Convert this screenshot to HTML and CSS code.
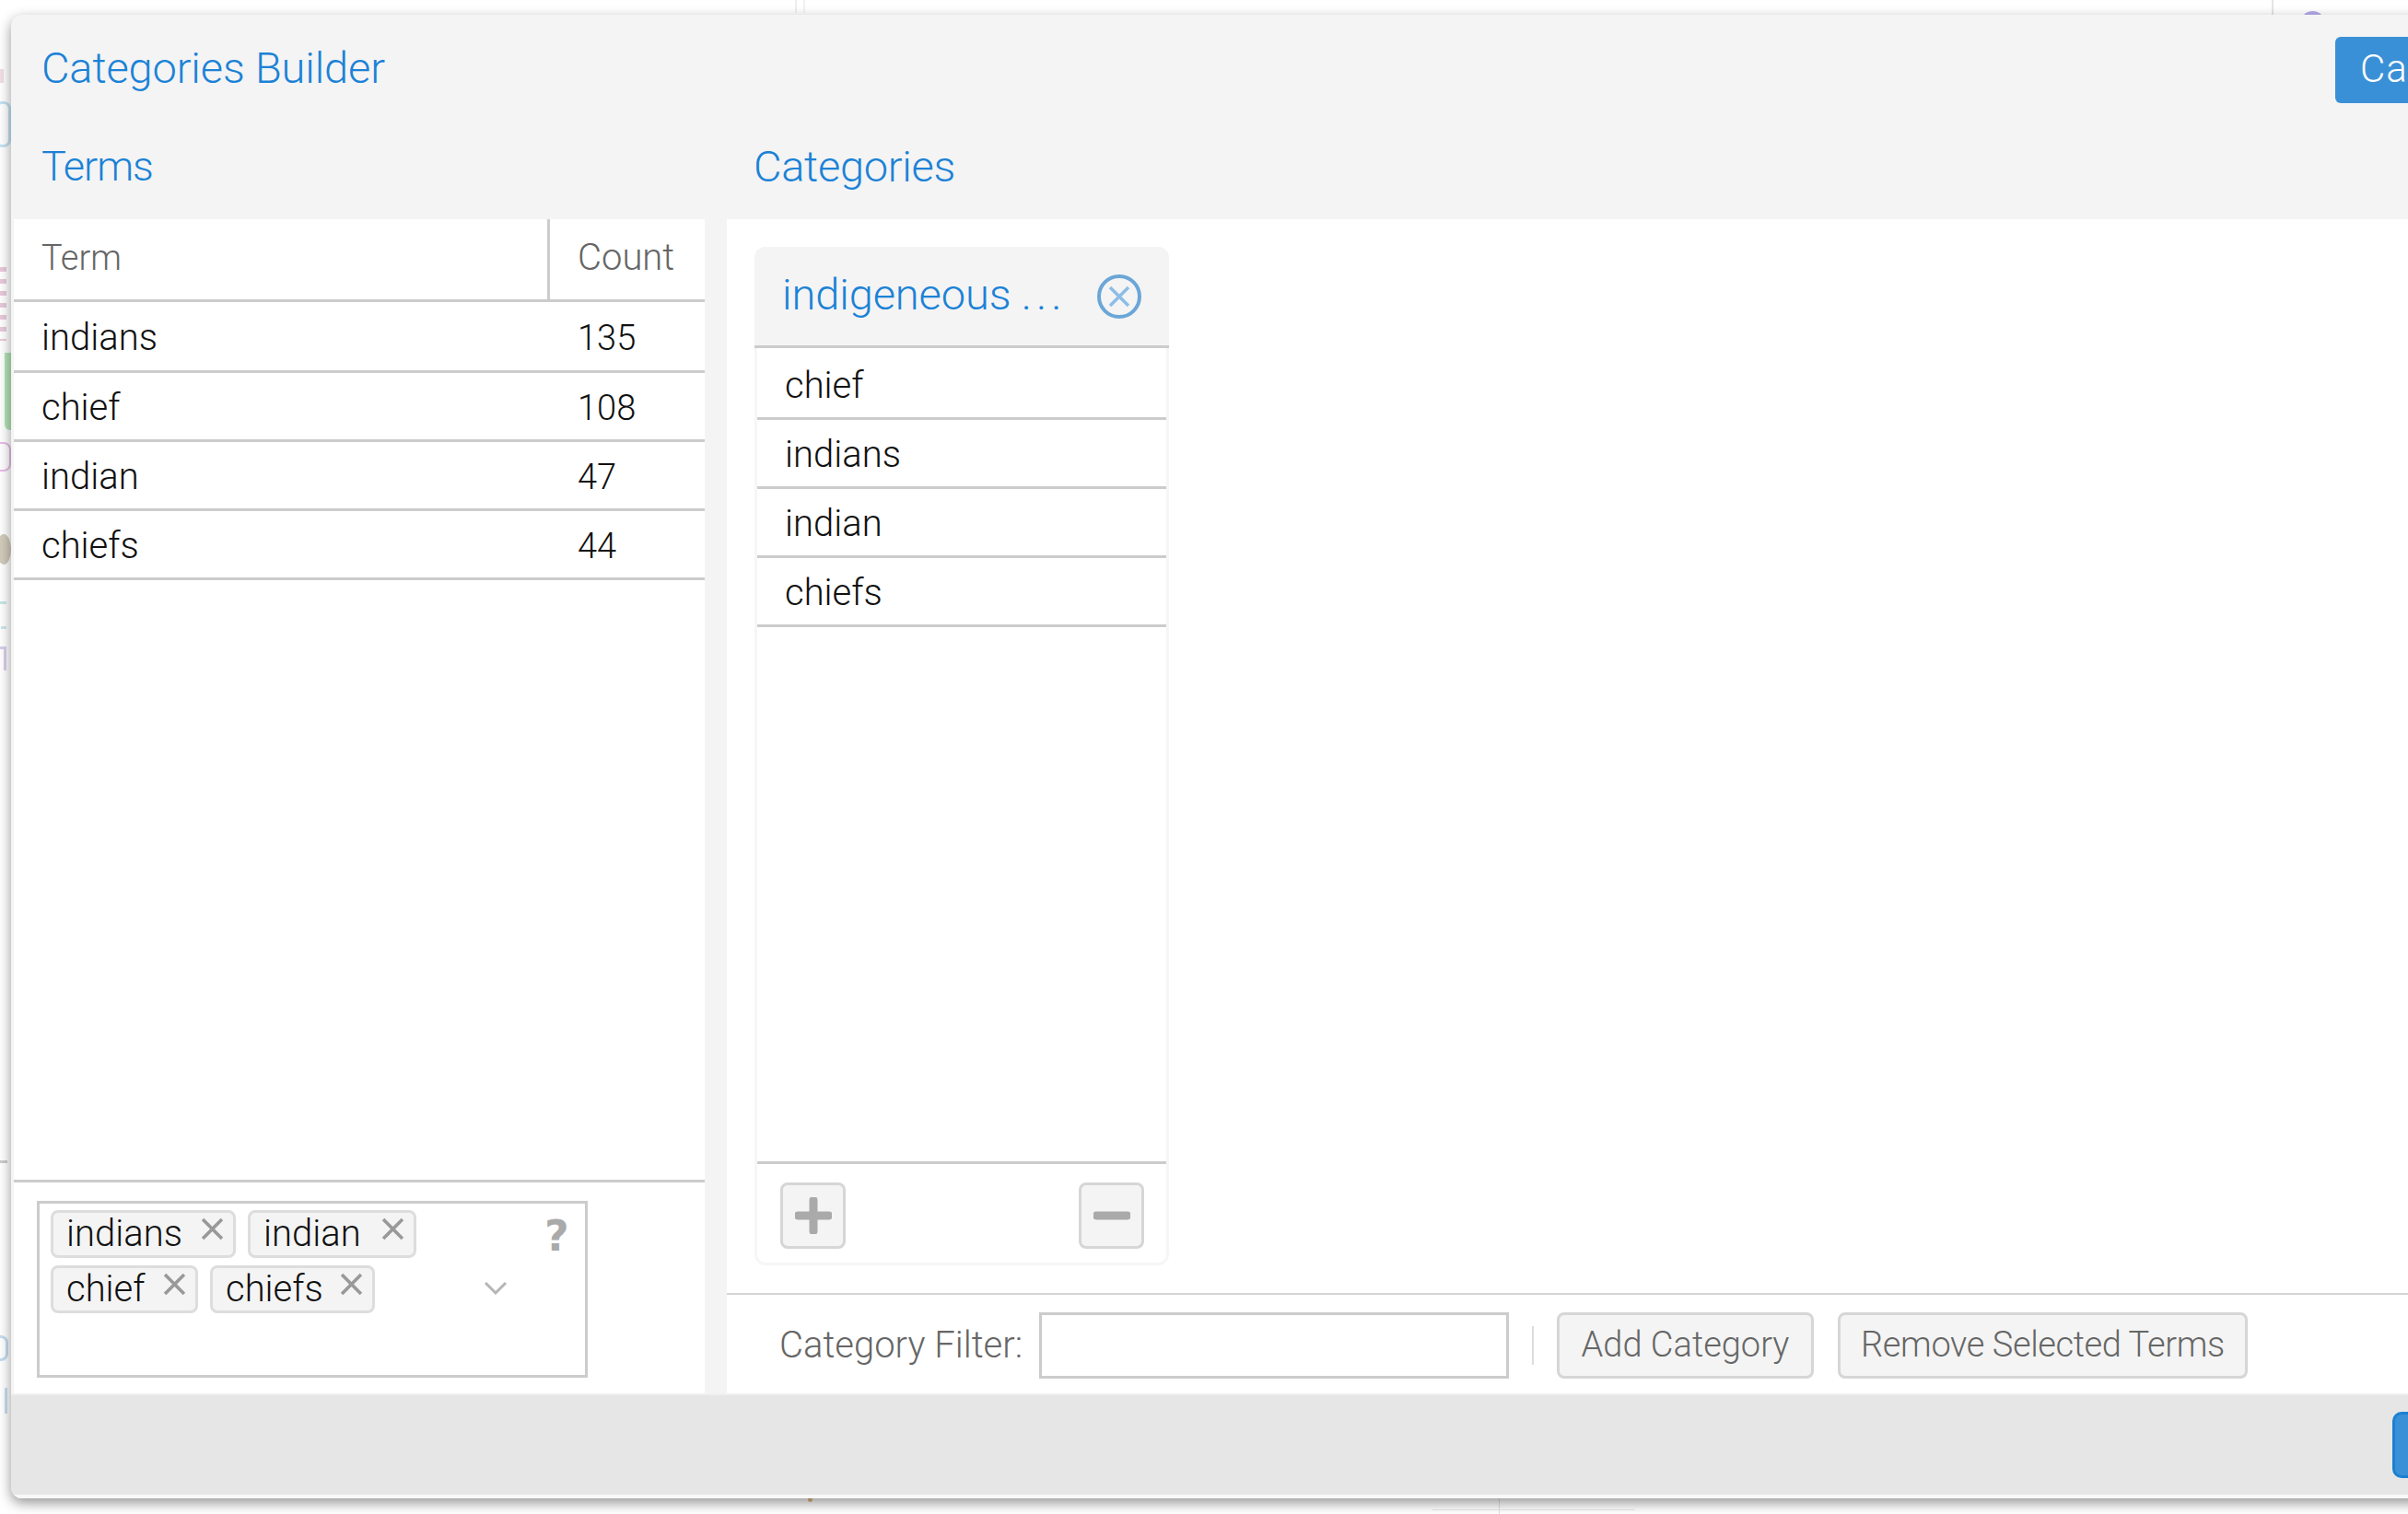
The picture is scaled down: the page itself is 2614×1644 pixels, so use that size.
FILE: index.html
```html
<!DOCTYPE html>
<html lang="en">
<head>
<meta charset="utf-8">
<title>Categories Builder</title>
<link rel="stylesheet" href="styles.css">
</head>
<body>
<div class="backdrop">
  <span class="mark mark-blue"></span>
  <span class="mark mark-pink"></span>
  <span class="mark mark-pink2"></span>
  <span class="mark mark-green"></span>
  <span class="mark mark-lilac"></span>
  <span class="mark mark-tan"></span>
  <span class="mark mark-teal"></span>
  <span class="mark mark-teal2"></span>
  <span class="mark mark-purple"></span>
  <span class="mark mark-gray"></span>
  <span class="mark mark-nine"></span>
  <span class="mark mark-four"></span>
  <span class="mark mark-dot"></span>
  <span class="mark mark-vline"></span>
  <span class="mark mark-hline"></span>
  <span class="mark mark-top1"></span>
  <span class="mark mark-top2"></span>
  <span class="rule-top"></span>
  <span class="avatar"></span>
</div>
<main class="modal">
  <header class="modal-head">
    <div class="title-row">
      <h1 class="title">Categories Builder</h1>
      <button class="btn-primary cancel">Cancel</button>
    </div>
    <div class="section-row">
      <h2 class="section section-terms">Terms</h2>
      <h2 class="section section-cats">Categories</h2>
    </div>
  </header>
  <div class="modal-body">
    <section class="terms">
      <div class="table-head">
        <div class="th th-term">Term</div>
        <div class="th th-count">Count</div>
      </div>
      <div class="term-row first"><span>indians</span><span class="num">135</span></div>
      <div class="term-row"><span>chief</span><span class="num">108</span></div>
      <div class="term-row"><span>indian</span><span class="num">47</span></div>
      <div class="term-row"><span>chiefs</span><span class="num">44</span></div>
      <div class="terms-fill"></div>
      <div class="tag-area">
        <div class="tag-box">
          <div class="tags">
            <span class="chip chip-a">indians<svg class="chip-x" viewBox="0 0 24 24"><path d="M2 2 22 22M22 2 2 22"/></svg></span>
            <span class="chip chip-b">indian<svg class="chip-x" viewBox="0 0 24 24"><path d="M2 2 22 22M22 2 2 22"/></svg></span>
            <span class="chip chip-c">chief<svg class="chip-x" viewBox="0 0 24 24"><path d="M2 2 22 22M22 2 2 22"/></svg></span>
            <span class="chip chip-d">chiefs<svg class="chip-x" viewBox="0 0 24 24"><path d="M2 2 22 22M22 2 2 22"/></svg></span>
          </div>
          <span class="help">?</span>
          <svg class="chevron" viewBox="0 0 26 16"><path d="M2 2 13 13 24 2"/></svg>
        </div>
      </div>
    </section>
    <section class="categories">
      <div class="canvas">
        <article class="card">
          <div class="card-head">
            <span class="card-title">indigeneous <span class="dots">...</span></span>
            <svg class="card-close" viewBox="0 0 48 48"><circle cx="24" cy="24" r="22"/><path d="M14 14 34 34M34 14 14 34"/></svg>
          </div>
          <div class="cat-row cat-first">chief</div>
          <div class="cat-row">indians</div>
          <div class="cat-row">indian</div>
          <div class="cat-row">chiefs</div>
          <div class="card-fill"></div>
          <div class="card-foot">
            <button class="icon-btn" aria-label="Add"><svg viewBox="0 0 40 40"><path d="M20 3V37M3 20H37"/></svg></button>
            <button class="icon-btn" aria-label="Remove"><svg viewBox="0 0 40 40"><path d="M3 20H37"/></svg></button>
          </div>
        </article>
      </div>
      <div class="filter-bar">
        <label class="filter-label">Category Filter:</label>
        <input class="filter-input" type="text">
        <span class="divider"></span>
        <button class="btn btn-add">Add Category</button>
        <button class="btn btn-remove">Remove Selected Terms</button>
      </div>
    </section>
  </div>
  <footer class="modal-foot"><button class="btn-primary ok" aria-label="OK"></button></footer>
</main>
</body>
</html>
```
FILE: styles.css
```css
html, body { margin: 0; padding: 0; }
body {
  width: 2614px; height: 1644px; overflow: hidden; background: #fff; position: relative;
  font-family: Roboto, "Liberation Sans", sans-serif; font-weight: 300; font-size: 40px; color: #111;
}
button, input { font: inherit; box-sizing: border-box; }
h1, h2 { margin: 0; font-weight: 300; }

.backdrop { position: absolute; inset: 0; overflow: hidden; }
.mark { position: absolute; display: block; }
.mark-blue { left: -6px; top: 110px; width: 18px; height: 50px; border: 3px solid #c5e3f3; box-sizing: border-box; border-radius: 8px; }
.mark-pink { left: 0; top: 75px; width: 4px; height: 15px; background: #f3dde6; }
.mark-pink2 { left: 0; top: 290px; width: 7px; height: 80px; background: repeating-linear-gradient(#e8c9dc 0 5px, #fff 5px 13px); }
.mark-green { left: 5px; top: 383px; width: 7px; height: 84px; background: #b3e3b5; border-radius: 0 0 0 6px; }
.mark-lilac { left: -8px; top: 480px; width: 20px; height: 32px; border: 2px solid #e8bcea; box-sizing: border-box; border-radius: 0 8px 8px 0; }
.mark-tan { left: -4px; top: 580px; width: 16px; height: 33px; border-radius: 50%; background: #d2cbbc; }
.mark-teal { left: 0; top: 653px; width: 7px; height: 3px; background: #cbe7e7; }
.mark-teal2 { left: 1px; top: 680px; width: 6px; height: 3px; background: #cbe7e7; }
.mark-purple { left: 0; top: 702px; width: 7px; height: 26px; border-top: 3px solid #d9cdec; border-right: 3px solid #d9cdec; box-sizing: border-box; }
.mark-gray { left: 0; top: 1260px; width: 8px; height: 20px; border-top: 3px solid #ccc; box-sizing: border-box; }
.mark-nine { left: -10px; top: 1450px; width: 19px; height: 28px; border: 3px solid #c6dcf1; border-radius: 8px; box-sizing: border-box; }
.mark-four { left: 0; top: 1507px; width: 8px; height: 28px; border-right: 3px solid #c6dcf1; box-sizing: border-box; }
.mark-dot { left: 877px; top: 1626px; width: 5px; height: 5px; border-radius: 50%; background: #e6bd86; }
.mark-vline { left: 1627px; top: 1627px; width: 1px; height: 17px; background: #e0e0e0; }
.mark-hline { left: 1555px; top: 1639px; width: 220px; height: 1px; background: #e8e8e8; }
.mark-top1 { left: 863px; top: 0; width: 2px; height: 14px; background: #eee; }
.mark-top2 { left: 872px; top: 0; width: 2px; height: 14px; background: #f2f2f2; }
.rule-top { position: absolute; left: 2466px; top: 0; width: 2px; height: 20px; background: #e4e4e4; }
.avatar { position: absolute; left: 2497px; top: 12px; width: 27px; height: 27px; border-radius: 50%; background: #b5a9e8; }

.modal {
  position: absolute; left: 12px; top: 16px; width: 2660px; height: 1611px;
  display: flex; flex-direction: column; background: #f4f4f4; border-radius: 12px;
  box-shadow: 0 5px 14px rgba(0,0,0,.42); overflow: hidden;
}
.modal-head { height: 222px; flex: none; }
.title-row { height: 125px; display: flex; justify-content: space-between; padding: 24px 0 0 33px; box-sizing: border-box; }
.title { font-size: 47px; line-height: 56px; color: #1b82d6; padding-top: 6px; letter-spacing: -.15px; }
.btn-primary { border: 0; background: #3a90d6; color: #fff; border-radius: 6px; }
.cancel { width: 137px; height: 72px; text-align: left; padding: 0 0 3px 27px; font-size: 42px; letter-spacing: 1px; white-space: nowrap; }
.section-row { display: flex; height: 97px; }
.section { font-size: 45px; line-height: 56px; color: #1b82d6; padding-top: 12px; }
.section-terms { width: 806px; padding-left: 33px; box-sizing: border-box; letter-spacing: -1px; }
.section-cats { font-size: 47px; letter-spacing: -.3px; }

.modal-body { height: 1275px; flex: none; display: flex; padding-left: 3px; box-sizing: border-box; }
.terms { width: 750px; flex: none; background: #fff; display: flex; flex-direction: column; }
.table-head { display: grid; grid-template-columns: 582px 1fr; height: 90px; border-bottom: 3px solid #ccc; box-sizing: border-box; color: #666; }
.th { line-height: 84px; padding-left: 30px; font-size: 38px; }
.th-term { border-right: 3px solid #ccc; }
.th-count { font-size: 40px; }
.term-row { display: grid; grid-template-columns: 582px 1fr; height: 75px; border-bottom: 3px solid #ccc; box-sizing: border-box; line-height: 76px; padding-left: 30px; }
.term-row.first { height: 77px; line-height: 78px; }
.num { font-size: 38px; }
.terms-fill { flex: 1; }
.tag-area { height: 232px; flex: none; border-top: 3px solid #ccc; padding: 20px 0 0 25px; box-sizing: border-box; }
.tag-box { position: relative; width: 598px; height: 192px; border: 3px solid #ccc; box-sizing: border-box; }
.tags { display: flex; flex-wrap: wrap; width: 440px; gap: 8px 13px; padding: 7px 0 0 12px; }
.chip { position: relative; display: block; height: 52px; box-sizing: border-box; border: 3px solid #ddd; border-radius: 8px; background: #f4f4f4; line-height: 46px; padding-left: 14px; color: #111; }
.chip-a { width: 201px; }
.chip-b { width: 183px; }
.chip-c { width: 160px; }
.chip-d { width: 179px; }
.chip-x { position: absolute; right: 10px; top: 5px; width: 25px; height: 25px; }
.chip-x path { fill: none; stroke: #999; stroke-width: 3.5; }
.help { position: absolute; left: 548px; top: 9px; font-family: "DejaVu Sans", sans-serif; font-weight: 700; font-size: 46px; line-height: 52px; color: #aaa; }
.chevron { position: absolute; left: 482px; top: 84px; width: 26px; height: 16px; }
.chevron path { fill: none; stroke: #b5b5b5; stroke-width: 3; }

.categories { margin-left: 24px; flex: 1; background: #fff; display: flex; flex-direction: column; }
.canvas { height: 1168px; flex: none; padding: 30px 0 0 30px; box-sizing: border-box; border-bottom: 2px solid #d4d4d4; }
.card { width: 450px; height: 1106px; box-sizing: border-box; border: 3px solid #f6f6f6; border-radius: 12px; display: flex; flex-direction: column; }
.card-head { height: 110px; flex: none; box-sizing: border-box; background: #f4f4f4; border-bottom: 3px solid #ccc; margin: -3px -3px 0; padding: 0 0 4px 30px; border-radius: 12px 12px 0 0; display: flex; align-items: center; gap: 31px; }
.card-title { font-size: 47px; color: #1b82d6; white-space: nowrap; width: 311px; letter-spacing: -.1px; }
.dots { letter-spacing: 5px; }
.card-close { width: 48px; height: 48px; flex: none; margin-top: 4px; }
.card-close circle { fill: none; stroke: #6ba6d8; stroke-width: 4; }
.card-close path { fill: none; stroke: #8dbde6; stroke-width: 3.5; }
.cat-row { height: 75px; flex: none; box-sizing: border-box; border-bottom: 3px solid #ccc; line-height: 76px; padding-left: 30px; }
.cat-first { height: 78px; line-height: 82px; }
.card-fill { flex: 1; }
.card-foot { height: 110px; flex: none; box-sizing: border-box; border-top: 3px solid #ccc; display: flex; justify-content: space-between; padding: 20px 24px 0 25px; }
.icon-btn { width: 71px; height: 72px; padding: 0; border: 3px solid #d6d6d6; border-radius: 8px; background: #f4f4f4; display: flex; align-items: center; justify-content: center; }
.icon-btn svg { width: 40px; height: 40px; }
.icon-btn path { fill: none; stroke: #aaa; stroke-width: 9; stroke-linecap: round; }

.filter-bar { flex: 1; display: flex; align-items: flex-start; padding: 19px 0 0 57px; }
.filter-label { color: #666; line-height: 72px; width: 282px; flex: none; white-space: nowrap; }
.filter-input { width: 510px; height: 72px; border: 3px solid #ccc; background: #fff; flex: none; }
.divider { width: 2px; height: 42px; margin: 15px 25px 0; background: #ddd; flex: none; }
.btn { height: 72px; border: 3px solid #d6d6d6; border-radius: 8px; background: #f4f4f4; color: #666; flex: none; padding: 0 0 2px; white-space: nowrap; font-size: 38px; }
.btn-add { width: 279px; margin-right: 26px; }
.btn-remove { width: 445px; letter-spacing: -.4px; }

.modal-foot { height: 114px; flex: none; box-sizing: border-box; background: #e6e6e6; border-top: 2px solid #f0f0f0; border-bottom: 4px solid #f8f8f8; padding: 18px 0 0 2585px; }
.ok { width: 120px; height: 72px; border: 3px solid #1b80d2; border-radius: 10px; }
```
